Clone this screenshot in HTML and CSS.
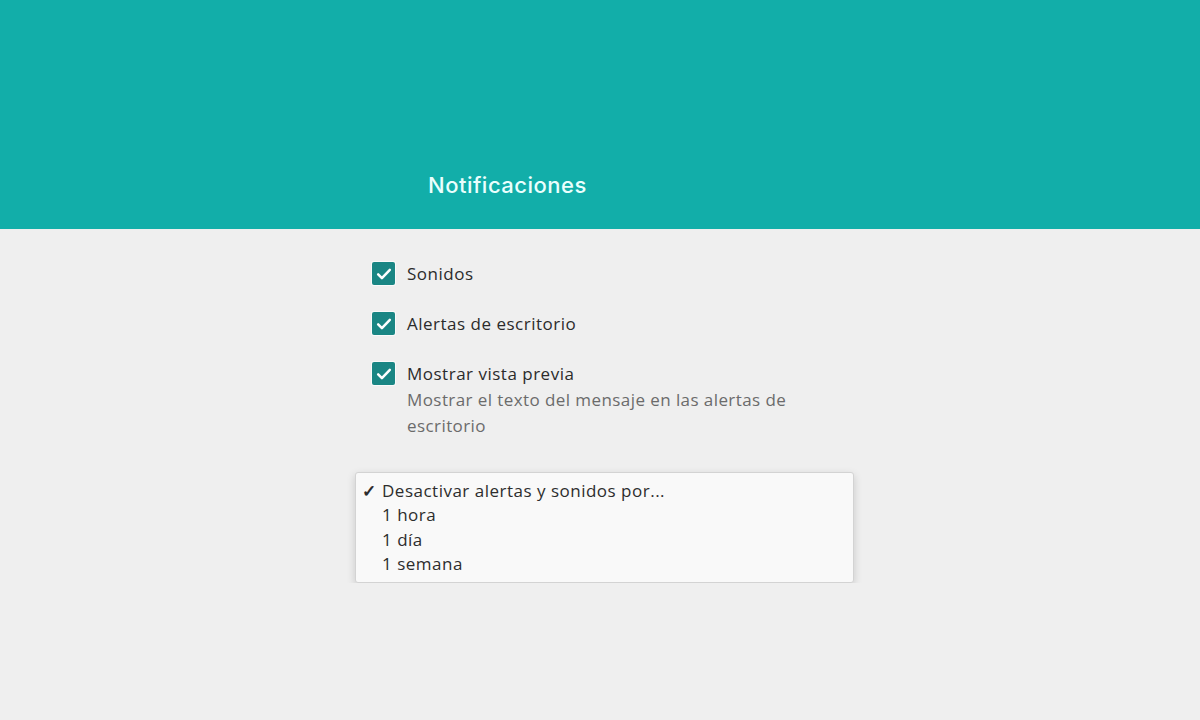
FILE: index.html
```html
<!DOCTYPE html>
<html lang="es">
<head>
<meta charset="utf-8">
<link rel="stylesheet" href="styles.css">
</head>
<body>
<header class="topbar">
  <div class="wrap">
    <h1 class="title">Notificaciones</h1>
  </div>
</header>
<main class="wrap content">
  <ul class="options">
    <li class="option">
      <span class="box"><svg viewBox="0 0 24 24" width="20" height="20"><path d="M5 12.5l4.5 4.5L19 7" fill="none" stroke="#fff" stroke-width="3" stroke-linecap="round" stroke-linejoin="round"/></svg></span>
      <div class="label">Sonidos</div>
    </li>
    <li class="option">
      <span class="box"><svg viewBox="0 0 24 24" width="20" height="20"><path d="M5 12.5l4.5 4.5L19 7" fill="none" stroke="#fff" stroke-width="3" stroke-linecap="round" stroke-linejoin="round"/></svg></span>
      <div class="label">Alertas de escritorio</div>
    </li>
    <li class="option">
      <span class="box"><svg viewBox="0 0 24 24" width="20" height="20"><path d="M5 12.5l4.5 4.5L19 7" fill="none" stroke="#fff" stroke-width="3" stroke-linecap="round" stroke-linejoin="round"/></svg></span>
      <div class="label">Mostrar vista previa
        <div class="desc">Mostrar el texto del mensaje en las alertas de<br>escritorio</div>
      </div>
    </li>
  </ul>
  <div class="menu">
    <div class="item selected"><span class="tick">✓</span>Desactivar alertas y sonidos por...</div>
    <div class="item"><span class="tick"></span>1 hora</div>
    <div class="item"><span class="tick"></span>1 día</div>
    <div class="item"><span class="tick"></span>1 semana</div>
  </div>
</main>
</body>
</html>
```
FILE: styles.css
```css
html, body {
  margin: 0;
  padding: 0;
  background: #efefef;
  font-family: "Open Sans", "Liberation Sans", sans-serif;
  color: #2a2a2a;
}
.wrap {
  width: 500px;
  margin: 0 auto;
  padding-left: 5px;
  box-sizing: border-box;
}
.topbar {
  background: #12aea9;
  height: 229px;
  display: flex;
  align-items: flex-end;
}
.title {
  margin: 0 0 30px 73px;
  font-family: "Inter", "Liberation Sans", sans-serif;
  font-weight: 500;
  font-size: 22px;
  letter-spacing: 0.5px;
  line-height: 28px;
  color: #eafffd;
}
.content {
  padding-top: 33px;
}
.options {
  list-style: none;
  margin: 0 0 0 17px;
  padding: 0;
}
.option {
  display: flex;
  align-items: flex-start;
  margin-bottom: 26px;
}
.box {
  width: 23px;
  height: 23px;
  background: #1a8684;
  border-radius: 2px;
  box-shadow: 0 0 0 1px #fafafa;
  display: flex;
  align-items: center;
  justify-content: center;
  flex: none;
  margin-right: 12px;
}
.label {
  font-size: 17px;
  line-height: 24px;
  letter-spacing: 0.5px;
  color: #2b2b2b;
}
.desc {
  color: #6b6b6b;
  line-height: 26px;
  letter-spacing: 0.42px;
  margin-top: 1px;
}
.menu {
  margin-top: 33px;
  width: 499px;
  background: #f9f9f9;
  border: 1px solid #d3d3d3;
  border-radius: 3px;
  box-shadow: 0 3px 8px rgba(0,0,0,0.16);
  padding: 6px 0 6px 0;
  box-sizing: border-box;
}
.item {
  font-size: 17px;
  line-height: 24.3px;
  letter-spacing: 0.5px;
  color: #2d2d2d;
  display: flex;
}
.tick {
  width: 26px;
  padding-left: 6px;
  box-sizing: border-box;
  flex: none;
  font-weight: 700;
  letter-spacing: 0;
}
```
